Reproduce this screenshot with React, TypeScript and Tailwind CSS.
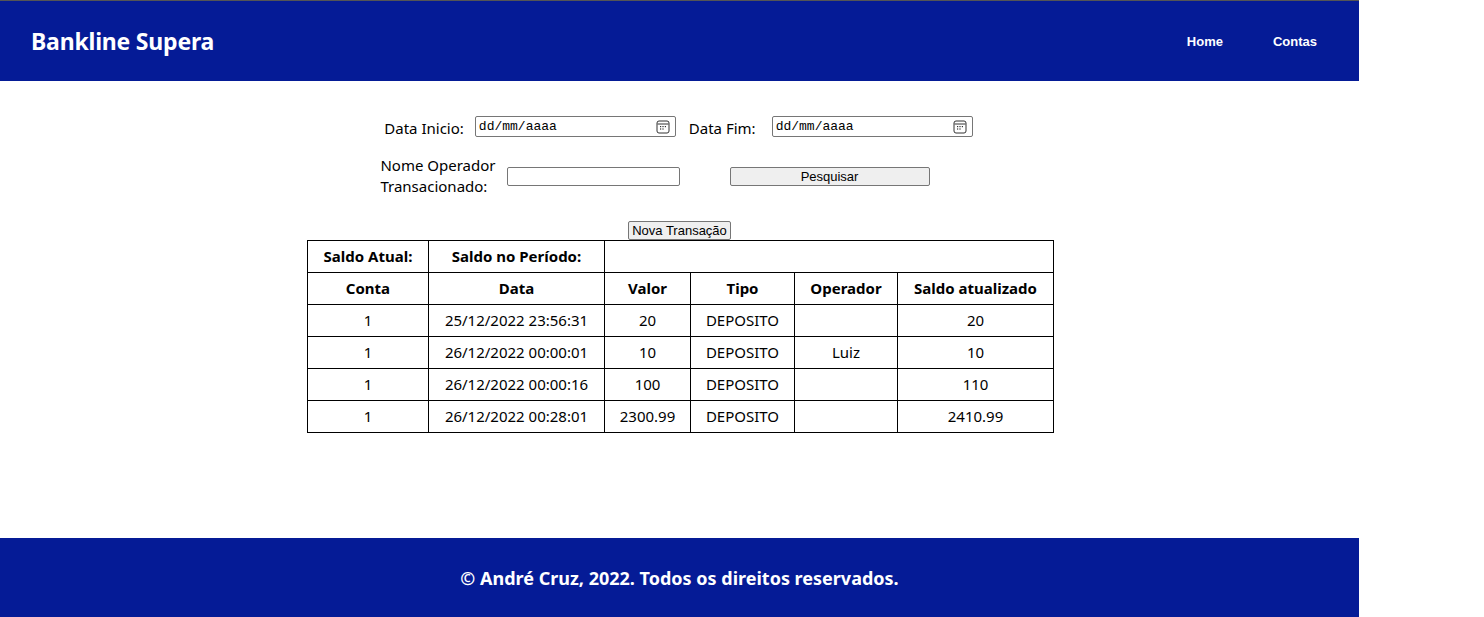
import React from "react";

const rows = [
  { conta: "1", data: "25/12/2022 23:56:31", valor: "20", tipo: "DEPOSITO", op: "", saldo: "20" },
  { conta: "1", data: "26/12/2022 00:00:01", valor: "10", tipo: "DEPOSITO", op: "Luiz", saldo: "10" },
  { conta: "1", data: "26/12/2022 00:00:16", valor: "100", tipo: "DEPOSITO", op: "", saldo: "110" },
  { conta: "1", data: "26/12/2022 00:28:01", valor: "2300.99", tipo: "DEPOSITO", op: "", saldo: "2410.99" },
];

function CalendarIcon() {
  return (
    <svg width="14" height="14" viewBox="0 0 14 14" fill="none">
      <rect x="1" y="1" width="12" height="12" rx="2" stroke="#333" strokeWidth="1" />
      <line x1="1.5" y1="4" x2="12.5" y2="4" stroke="#333" strokeWidth="1" />
      <rect x="4" y="6" width="1.2" height="1.2" fill="#333" />
      <rect x="6.4" y="6" width="1.2" height="1.2" fill="#333" />
      <rect x="8.8" y="6" width="1.2" height="1.2" fill="#333" />
      <rect x="4" y="8.4" width="1.2" height="1.2" fill="#333" />
      <rect x="6.4" y="8.4" width="1.2" height="1.2" fill="#333" />
    </svg>
  );
}

function DateInput() {
  return (
    <div className="flex h-[21px] w-[201px] items-center justify-between rounded-[2px] border border-[#767676] bg-white pl-[3px] pr-[5px]">
      <span className="text-[13px] leading-none text-black" style={{ fontFamily: '"Liberation Mono", monospace' }}>
        dd/mm/aaaa
      </span>
      <CalendarIcon />
    </div>
  );
}

export default function App() {
  const sans = { fontFamily: '"Noto Sans", "Open Sans", sans-serif' };
  const arial = { fontFamily: '"Liberation Sans", Arial, sans-serif' };
  const th = "border border-black font-bold text-center";
  const td = "border border-black text-center";
  return (
    <div className="w-[1359px] bg-white text-black" style={sans}>
      <header className="flex h-[81px] items-center justify-between border-t border-[#555555] bg-[#051b96] pl-[31px] pr-[41px]">
        <h1 className="text-[23px] font-bold tracking-[-0.2px] text-white">Bankline Supera</h1>
        <nav className="flex gap-[50px] pt-[2px] pr-[1px] text-[13px] font-bold text-white" style={arial}>
          <a>Home</a>
          <a>Contas</a>
        </nav>
      </header>

      <main className="flex h-[457px] flex-col items-center pt-[35px]">
        <div className="mr-[2px] flex h-[21px] items-center text-[15px]">
          <span className="mr-[11px] pt-[3px]">Data Inicio:</span>
          <DateInput />
          <span className="ml-[13px] mr-[16px] pt-[3px]">Data Fim:</span>
          <DateInput />
        </div>

        <div className="mt-[18px] mr-[49px] flex items-center text-[15px]">
          <div className="leading-[21px]">
            <div>Nome Operador</div>
            <div>Transacionado:</div>
          </div>
          <div className="ml-[11px] h-[19px] w-[173px] rounded-[2px] border border-[#767676] bg-white" />
          <button
            className="ml-[50px] h-[19px] w-[200px] rounded-[2px] border border-[#767676] bg-[#efefef] text-[13px] leading-none text-black"
            style={arial}
          >
            Pesquisar
          </button>
        </div>

        <button
          className="mt-[24px] h-[19px] w-[103px] rounded-[2px] border border-[#767676] bg-[#efefef] px-[2px] text-[13px] leading-none text-black"
          style={arial}
        >
          Nova Transação
        </button>

        <table className="ml-[2px] w-[746px] table-fixed border-collapse text-[15px]">
          <colgroup>
            <col className="w-[121px]" />
            <col className="w-[176px]" />
            <col className="w-[86px]" />
            <col className="w-[104px]" />
            <col className="w-[103px]" />
            <col className="w-[156px]" />
          </colgroup>
          <tbody>
            <tr className="h-[32px]">
              <th className={th}>Saldo Atual:</th>
              <th className={th}>Saldo no Período:</th>
              <td className={td} colSpan={4}></td>
            </tr>
            <tr className="h-[32px]">
              <th className={th}>Conta</th>
              <th className={th}>Data</th>
              <th className={th}>Valor</th>
              <th className={th}>Tipo</th>
              <th className={th}>Operador</th>
              <th className={th}>Saldo atualizado</th>
            </tr>
            {rows.map((r, i) => (
              <tr key={i} className="h-[32px]">
                <td className={td}>{r.conta}</td>
                <td className={td}>{r.data}</td>
                <td className={td}>{r.valor}</td>
                <td className={td}>{r.tipo}</td>
                <td className={td}>{r.op}</td>
                <td className={td}>{r.saldo}</td>
              </tr>
            ))}
          </tbody>
        </table>
      </main>

      <footer className="flex h-[80px] items-center justify-center bg-[#051b96]">
        <p className="text-[18px] font-bold text-white">© André Cruz, 2022. Todos os direitos reservados.</p>
      </footer>
    </div>
  );
}
